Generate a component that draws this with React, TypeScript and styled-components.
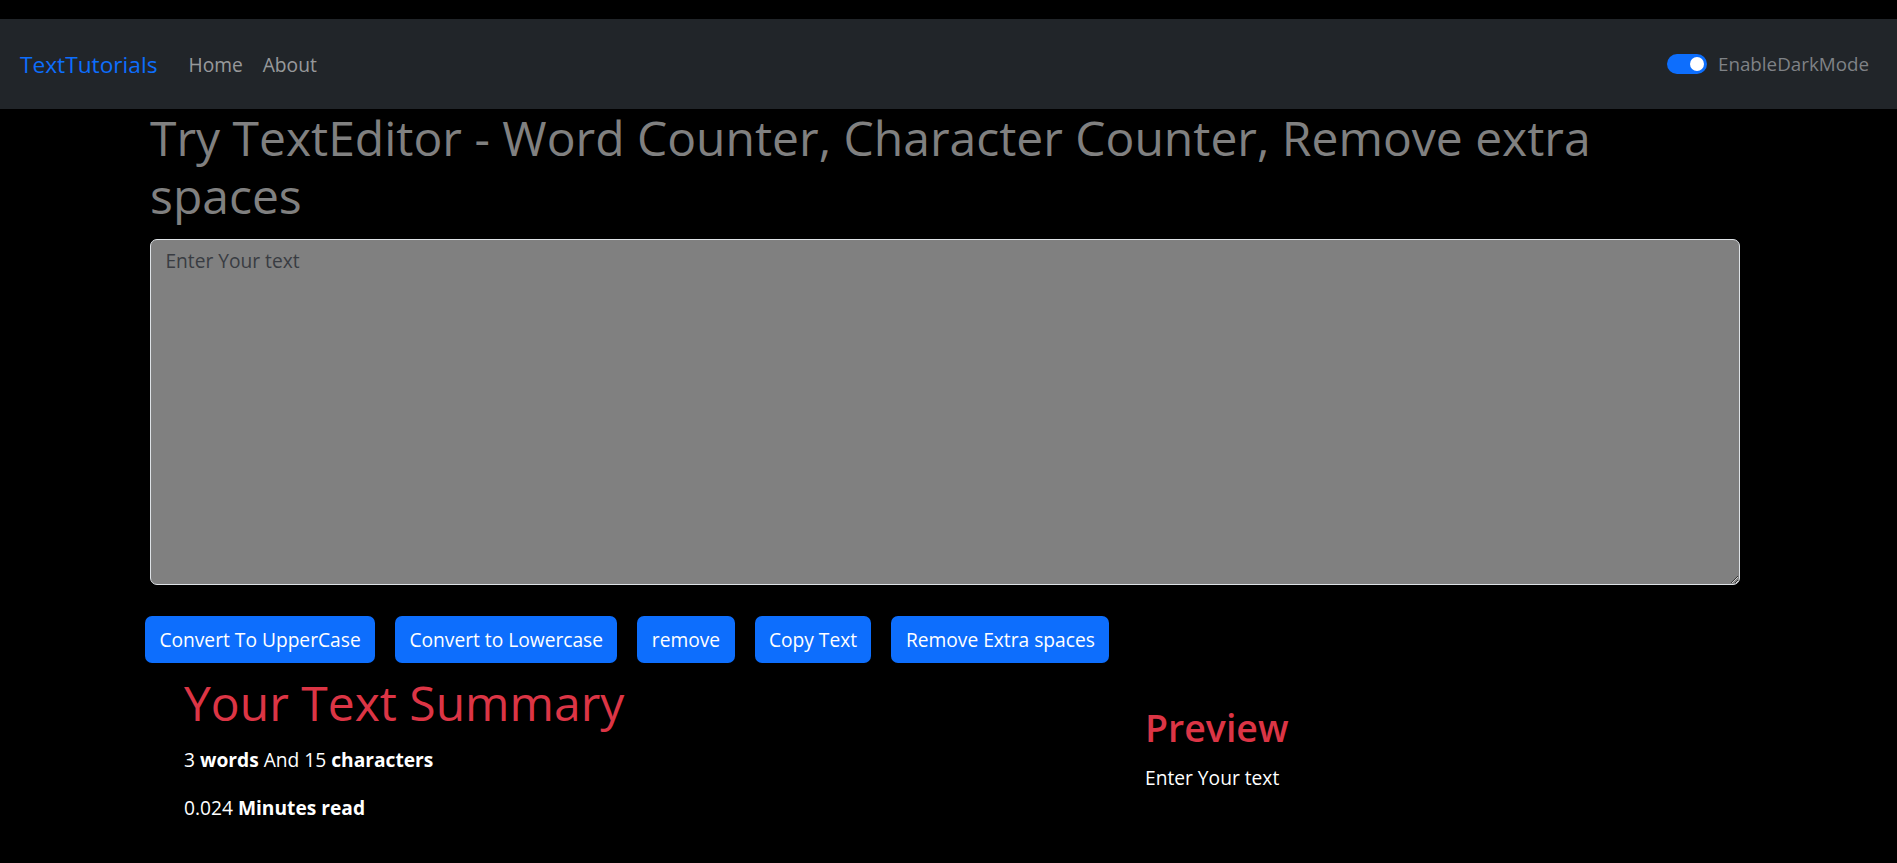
import React, { useState } from "react";
import styled, { createGlobalStyle } from "styled-components";

const Global = createGlobalStyle`
  html, body { margin: 0; padding: 0; background: #000; }
  body { font-family: "Open Sans", "Noto Sans", sans-serif; color: #fff; }
  * { box-sizing: border-box; }
`;

const Page = styled.div`
  padding-top: 19px;
  min-height: 863px;
  background: #000;
`;

const NavBar = styled.nav`
  height: 90px;
  background: #212529;
  display: flex;
  align-items: center;
  padding: 0 28px 0 20px;
`;

const Brand = styled.a`
  font-size: 22.7px;
  color: #0d6efd;
  text-decoration: none;
  margin-right: 31px;
`;

const NavLinks = styled.div`
  display: flex;
  gap: 20px;
  flex: 1;
`;

const NavLink = styled.a`
  font-size: 19.2px;
  color: rgba(255, 255, 255, 0.55);
  text-decoration: none;
`;

const Switch = styled.label`
  display: flex;
  align-items: center;
  gap: 11px;
  font-size: 18.8px;
  color: #7f8286;
`;

const Track = styled.span<{ $on: boolean }>`
  width: 40px;
  height: 20px;
  border-radius: 10px;
  background: ${(p) => (p.$on ? "#0d6efd" : "#495057")};
  display: flex;
  align-items: center;
  justify-content: ${(p) => (p.$on ? "flex-end" : "flex-start")};
  padding: 0 3px;
`;

const Knob = styled.span`
  width: 14px;
  height: 14px;
  border-radius: 50%;
  background: #fff;
`;

const Main = styled.main`
  padding: 0 0 0 150px;
  width: 1740px;
`;

const Title = styled.h1`
  margin: 0;
  font-size: 48px;
  font-weight: 500;
  line-height: 57.6px;
  color: #808080;
`;

const Editor = styled.textarea`
  display: block;
  margin-top: 15px;
  width: 1590px;
  height: 346px;
  background: #808080;
  border: 1px solid #dee2e6;
  border-radius: 7px;
  padding: 7.2px 14.4px;
  font-family: inherit;
  font-size: 19.2px;
  line-height: 1.5;
  color: #212529;
  outline: none;
  &::placeholder { color: #393c42; }
`;

const ButtonRow = styled.div`
  display: flex;
  gap: 20px;
  margin: 31px 0 0 -5px;
`;

const Button = styled.button`
  height: 47px;
  padding: 0 14.4px;
  background: #0d6efd;
  color: #fff;
  border: none;
  border-radius: 7px;
  font-family: inherit;
  font-size: 19.2px;
`;

const Summary = styled.section`
  display: flex;
  padding-left: 184px;
  margin-top: 11px;
`;

const LeftCol = styled.div`
  width: 961px;
`;

const RightCol = styled.div`
  padding-top: 31px;
`;

const BigHeading = styled.h1`
  margin: 0 0 14px;
  font-size: 48px;
  font-weight: 400;
  line-height: 57.6px;
  color: #dc3545;
`;

const SubHeading = styled.h2`
  margin: 0 0 12.6px;
  font-size: 37.5px;
  font-weight: 600;
  line-height: 46px;
  color: #dc3545;
`;

const Para = styled.p`
  margin: 0 0 19.2px;
  font-size: 19.2px;
  line-height: 28.8px;
  color: #fff;
  b { font-weight: 700; }
`;

export default function App() {
  const [text, setText] = useState("");
  const [dark] = useState(true);
  return (
    <Page>
      <Global />
      <NavBar>
        <Brand href="#">TextTutorials</Brand>
        <NavLinks>
          <NavLink href="#">Home</NavLink>
          <NavLink href="#">About</NavLink>
        </NavLinks>
        <Switch>
          <Track $on={dark}>
            <Knob />
          </Track>
          EnableDarkMode
        </Switch>
      </NavBar>
      <Main>
        <Title>Try TextEditor - Word Counter, Character Counter, Remove extra spaces</Title>
        <Editor
          placeholder="Enter Your text"
          value={text}
          onChange={(e) => setText(e.target.value)}
        />
        <ButtonRow>
          <Button>Convert To UpperCase</Button>
          <Button>Convert to Lowercase</Button>
          <Button>remove</Button>
          <Button>Copy Text</Button>
          <Button>Remove Extra spaces</Button>
        </ButtonRow>
      </Main>
      <Summary>
        <LeftCol>
          <BigHeading>Your Text Summary</BigHeading>
          <Para>
            3 <b>words</b> And 15 <b>characters</b>
          </Para>
          <Para>
            0.024 <b>Minutes read</b>
          </Para>
        </LeftCol>
        <RightCol>
          <SubHeading>Preview</SubHeading>
          <Para>Enter Your text</Para>
        </RightCol>
      </Summary>
    </Page>
  );
}
